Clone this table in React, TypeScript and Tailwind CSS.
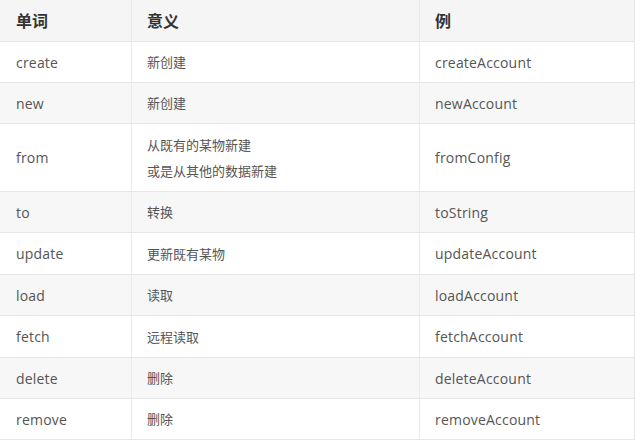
const rows: { word: string; meaning: string[]; example: string; h: string; gray: boolean }[] = [
  { word: "create", meaning: ["新创建"], example: "createAccount", h: "h-[41px]", gray: false },
  { word: "new", meaning: ["新创建"], example: "newAccount", h: "h-[41px]", gray: true },
  { word: "from", meaning: ["从既有的某物新建", "或是从其他的数据新建"], example: "fromConfig", h: "h-[68px]", gray: false },
  { word: "to", meaning: ["转换"], example: "toString", h: "h-[41px]", gray: true },
  { word: "update", meaning: ["更新既有某物"], example: "updateAccount", h: "h-[42px]", gray: false },
  { word: "load", meaning: ["读取"], example: "loadAccount", h: "h-[41px]", gray: true },
  { word: "fetch", meaning: ["远程读取"], example: "fetchAccount", h: "h-[42px]", gray: false },
  { word: "delete", meaning: ["删除"], example: "deleteAccount", h: "h-[41px]", gray: true },
  { word: "remove", meaning: ["删除"], example: "removeAccount", h: "h-[41px]", gray: false },
];

const font = { fontFamily: '"Open Sans", "Noto Sans CJK SC", sans-serif' };

export default function App() {
  return (
    <div className="h-[440px] w-[640px] overflow-hidden bg-white" style={font}>
      <div className="w-[635px] border-r border-[#e6e6e6]">
        <div className="flex h-[42px] border-b border-[#e6e6e6] bg-[#f5f5f5] text-[16px] font-bold text-[#333]">
          <div className="flex w-[132px] items-center border-r border-[#ebebeb] pl-4">单词</div>
          <div className="flex w-[288px] items-center border-r border-[#ebebeb] pl-[15px]">意义</div>
          <div className="flex flex-1 items-center pl-[15px]">例</div>
        </div>
        {rows.map((r) => (
          <div
            key={r.word}
            className={`flex ${r.h} border-b border-[#e6e6e6] ${r.gray ? "bg-[#f7f7f7]" : "bg-white"} text-[#555]`}
          >
            <div className="flex w-[132px] items-center border-r border-[#ebebeb] pl-4 text-[14px] tracking-[0.2px]">{r.word}</div>
            <div className="flex w-[288px] flex-col justify-center gap-[8px] border-r border-[#ebebeb] pl-[15px] text-[13px]">
              {r.meaning.map((m) => (
                <span key={m} className="leading-[18px]">{m}</span>
              ))}
            </div>
            <div className="flex flex-1 items-center pl-[15px] text-[14px] tracking-[0.2px]">{r.example}</div>
          </div>
        ))}
      </div>
    </div>
  );
}
